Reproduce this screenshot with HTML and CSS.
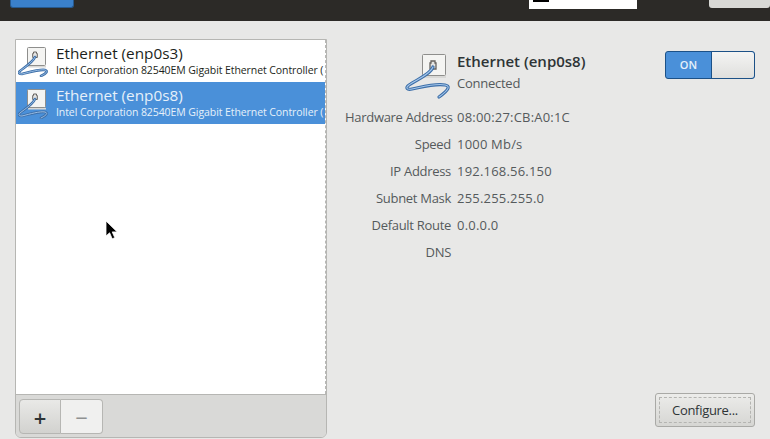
FILE: index.html
```html
<!DOCTYPE html>
<html lang="en">
<head>
    <meta charset="UTF-8">
    <title>Network</title>
    <link rel="stylesheet" href="styles.css">
</head>
<body>

    <svg class="icon-defs" width="0" height="0">
        <symbol id="wired" viewBox="0 0 48 48">
            <rect x="18.5" y="2.5" width="23" height="21" rx="1" fill="#f4f4f2" stroke="#8e8e8c"/>
            <rect x="19" y="24" width="23" height="2" fill="#d8d8d6"/>
            <path d="M27 9h4v2h1v6h-6v-6h1z" fill="#e4e4e2" stroke="#66625e" stroke-width="1.3"/>
            <path d="M29 15C27 22 12 28 5 33C1 36 3 38 8 37C18 35 32 31 41 33C46 34 46 37 35 45" fill="none" stroke="#3c6ea8" stroke-width="3.2" stroke-linecap="round"/>
            <path d="M29 15C27 22 12 28 5 33C1 36 3 38 8 37C18 35 32 31 41 33C46 34 46 37 35 45" fill="none" stroke="#a4c6ea" stroke-width="1.1" stroke-linecap="round"/>
        </symbol>
        <symbol id="wired-small" viewBox="0 0 32 32">
            <rect x="9.5" y="2.5" width="18" height="18" rx="1" fill="#f4f4f2" stroke="#8e8e8c"/>
            <rect x="10" y="21" width="18" height="1.5" fill="#d8d8d6"/>
            <path d="M15.5 7h3v1.500h.8v4h-4.600v-4h.8z" fill="#e4e4e2" stroke="#66625e"/>
            <path d="M17 12C15 17 7 22 2 26C0 28 1 29 4 29C12 27 22 24 27 25C30 26 29 28 23 31" fill="none" stroke="#3c6ea8" stroke-width="2.600" stroke-linecap="round"/>
            <path d="M17 12C15 17 7 22 2 26C0 28 1 29 4 29C12 27 22 24 27 25C30 26 29 28 23 31" fill="none" stroke="#a4c6ea" stroke-width="0.9" stroke-linecap="round"/>
        </symbol>
    </svg>

    <div class="top-bar">
        <div class="top-done"></div>
        <div class="top-search"><span class="top-search-mark"></span></div>
        <div class="top-help"></div>
    </div>

    <div class="content">
        <!-- Device list -->
        <div class="device-panel">
            <div class="device-list">
                <div class="device-row">
                    <svg class="device-icon"><use href="#wired-small"/></svg>
                    <div class="device-text">
                        <div class="device-name">Ethernet (enp0s3)</div>
                        <div class="device-desc">Intel Corporation 82540EM Gigabit Ethernet Controller (</div>
                    </div>
                </div>
                <div class="device-row selected">
                    <svg class="device-icon"><use href="#wired-small"/></svg>
                    <div class="device-text">
                        <div class="device-name">Ethernet (enp0s8)</div>
                        <div class="device-desc">Intel Corporation 82540EM Gigabit Ethernet Controller (</div>
                    </div>
                </div>
            </div>
            <div class="device-toolbar">
                <button class="tool-btn add">+</button><button class="tool-btn remove">&minus;</button>
            </div>
        </div>

        <!-- Device details -->
        <div class="detail-panel">
            <div class="detail-head">
                <svg class="detail-icon"><use href="#wired"/></svg>
                <div class="detail-title">
                    <div class="detail-name">Ethernet (enp0s8)</div>
                    <div class="detail-status">Connected</div>
                </div>
                <div class="switch">
                    <span class="switch-on">ON</span>
                    <span class="switch-knob"></span>
                </div>
            </div>

            <div class="detail-grid">
                <span class="detail-label">Hardware Address</span><span class="detail-value">08:00:27:CB:A0:1C</span>
                <span class="detail-label">Speed</span><span class="detail-value">1000 Mb/s</span>
                <span class="detail-label">IP Address</span><span class="detail-value">192.168.56.150</span>
                <span class="detail-label">Subnet Mask</span><span class="detail-value">255.255.255.0</span>
                <span class="detail-label">Default Route</span><span class="detail-value">0.0.0.0</span>
                <span class="detail-label">DNS</span><span class="detail-value"></span>
            </div>

            <div class="detail-actions">
                <button class="configure-btn"><span class="configure-focus">Configure...</span></button>
            </div>
        </div>
    </div>

    <!-- Mouse pointer -->
    <svg class="pointer" width="14" height="21" viewBox="0 0 14 21">
        <path d="M1 1v15l3.600-3.200 2.600 6 2.600-1.100-2.600-5.800h5z" fill="#000" stroke="#fff" stroke-width="0.8"/>
    </svg>

</body>
</html>
```

FILE: styles.css
```css
/* General Styles */
* {
    margin: 0;
    padding: 0;
    box-sizing: border-box;
}

body {
    width: 770px;
    height: 439px;
    overflow: hidden;
    position: relative;
    font-family: 'Open Sans', sans-serif;
    font-size: 13px;
    background-color: #e8e8e7;
    color: #2e3436;
}

.icon-defs {
    position: absolute;
}

/* Top Bar */
.top-bar {
    height: 21px;
    background-color: #2c2a27;
    display: flex;
    align-items: flex-start;
    padding-left: 10px;
}

.top-done {
    width: 64px;
    height: 8px;
    background-color: #3a80cb;
    border: 1px solid #26598f;
    border-top: none;
    border-radius: 0 0 3px 3px;
}

.top-search {
    width: 108px;
    height: 9px;
    margin-left: 455px;
    padding-left: 4px;
    background-color: #fff;
}

.top-search-mark {
    display: block;
    width: 16px;
    height: 2px;
    background-color: #000;
}

.top-help {
    width: 61px;
    height: 8px;
    margin-left: 72px;
    background-color: #d8d8d5;
    border-radius: 0 0 3px 3px;
}

/* Main Layout */
.content {
    height: 418px;
    display: flex;
    padding: 18px 15px 1px 15px;
}

/* Device List */
.device-panel {
    width: 312px;
    display: flex;
    flex-direction: column;
    border: 1px solid #b6b6b3;
    border-radius: 0 0 6px 6px;
}

.device-list {
    flex: 1;
    background-color: #fff;
    overflow: hidden;
    border-right: 1px dashed #b8b8b6;
}

.device-row {
    height: 42px;
    display: flex;
    align-items: center;
    color: #1c1f20;
}

.device-row.selected {
    background-color: #4a90d9;
    color: #e6f0fa;
}

.device-icon {
    width: 32px;
    height: 32px;
    margin: 0 8px 0 2px;
    flex-shrink: 0;
}

.device-text {
    min-width: 0;
    white-space: nowrap;
    margin-left: -2px;
    margin-top: -3px;
}

.device-name {
    font-size: 15.3px;
    line-height: 20px;
}

.device-desc {
    font-size: 10.5px;
    line-height: 14px;
    letter-spacing: -0.08px;
}

.device-toolbar {
    height: 43px;
    padding: 4px 3px 4px 3px;
    background-color: #d9d9d7;
    border-top: 1px solid #b6b6b3;
    border-radius: 0 0 5px 5px;
    display: flex;
    align-items: flex-start;
}

.tool-btn {
    width: 42px;
    height: 35px;
    font-family: inherit;
    font-size: 22px;
    line-height: 30px;
    border: 1px solid #b6b6b3;
}

.tool-btn.add {
    color: #2e3436;
    font-weight: 600;
    background: linear-gradient(#e9e9e7, #d2d2cf);
    border-radius: 4px 0 0 4px;
}

.tool-btn.remove {
    color: #8f9191;
    background-color: #f0f0ef;
    border-left: none;
    border-radius: 0 4px 4px 0;
}

/* Detail Panel */
.detail-panel {
    flex: 1;
    position: relative;
    display: flex;
    flex-direction: column;
    padding-left: 18px;
}

.detail-head {
    height: 60px;
    display: flex;
    align-items: flex-start;
    padding: 12px 0 0 59px;
}

.detail-icon {
    width: 48px;
    height: 48px;
    margin-top: 1px;
    margin-right: 5px;
    flex-shrink: 0;
}

.detail-title {
    flex: 1;
}

.detail-name {
    font-size: 15px;
    font-weight: 600;
    line-height: 20px;
}

.detail-status {
    margin-top: 2px;
    line-height: 20px;
    letter-spacing: -0.25px;
    color: #555a5c;
}

/* On/Off Switch */
.switch {
    width: 90px;
    height: 28px;
    display: flex;
    background-color: #4a90d9;
    border: 1px solid #1c5187;
    border-radius: 3px;
}

.switch-on {
    width: 45px;
    font-size: 11px;
    font-weight: 600;
    line-height: 25px;
    text-align: center;
    color: #e6f0fa;
}

.switch-knob {
    flex: 1;
    background: linear-gradient(#f4f4f3, #dfdfdd);
    border-left: 1px solid #1c5187;
    border-radius: 0 3px 3px 0;
}

.detail-grid {
    margin-top: 5px;
    display: grid;
    grid-template-columns: 106px auto;
    grid-auto-rows: 27px;
    column-gap: 6px;
    line-height: 27px;
    color: #555a5c;
}

.detail-label {
    text-align: right;
    white-space: nowrap;
    letter-spacing: -0.3px;
}

.detail-value {
    letter-spacing: 0.2px;
}

.detail-actions {
    margin-top: auto;
    padding-bottom: 11px;
    display: flex;
    justify-content: flex-end;
}

.configure-btn {
    width: 100px;
    height: 34px;
    padding: 3px;
    font-family: inherit;
    font-size: 13px;
    letter-spacing: -0.3px;
    color: #2e3436;
    background: linear-gradient(#ececea, #d6d6d3);
    border: 1px solid #a9a9a6;
    border-radius: 3px;
}

.configure-focus {
    display: block;
    height: 100%;
    line-height: 24px;
    border: 1px dashed #b4b4b1;
}

/* Mouse Pointer */
.pointer {
    position: absolute;
    left: 105px;
    top: 220px;
}
```
